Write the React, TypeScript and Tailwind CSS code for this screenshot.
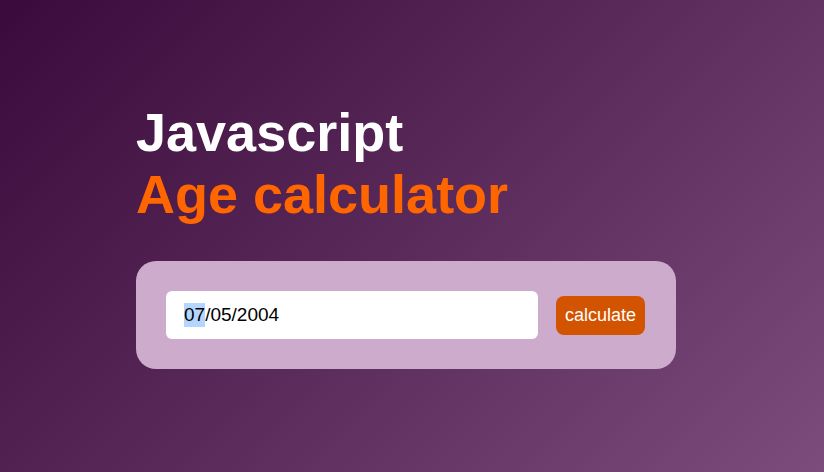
export default function App() {
  return (
    <div
      className="w-[824px] h-[472px] bg-[linear-gradient(135deg,#3a0a3c_0%,#5a2a5a_50%,#7c4c7c_100%)] pl-[136px] pt-[101px]"
      style={{ fontFamily: '"Liberation Sans", Arial, sans-serif' }}
    >
      <h1 className="text-[54px] font-bold leading-[62px] text-white">Javascript</h1>
      <h2 className="text-[54px] font-bold leading-[62px] text-[#ff6600]">Age calculator</h2>
      <div className="mt-[36px] w-[540px] h-[108px] rounded-[20px] bg-[#cdabcd] pl-[30px] pr-[31px] flex items-center gap-[18px]">
        <div className="w-[372px] h-[48px] bg-white rounded-[6px] flex items-center pl-[18px] text-[19px] text-black">
          <span className="bg-[#b4d5fe] leading-[24px]">07</span>
          <span>/05/2004</span>
        </div>
        <button className="h-[39px] w-[89px] rounded-[8px] bg-[#d35400] text-white text-[18px] flex items-center justify-center">
          calculate
        </button>
      </div>
    </div>
  );
}
